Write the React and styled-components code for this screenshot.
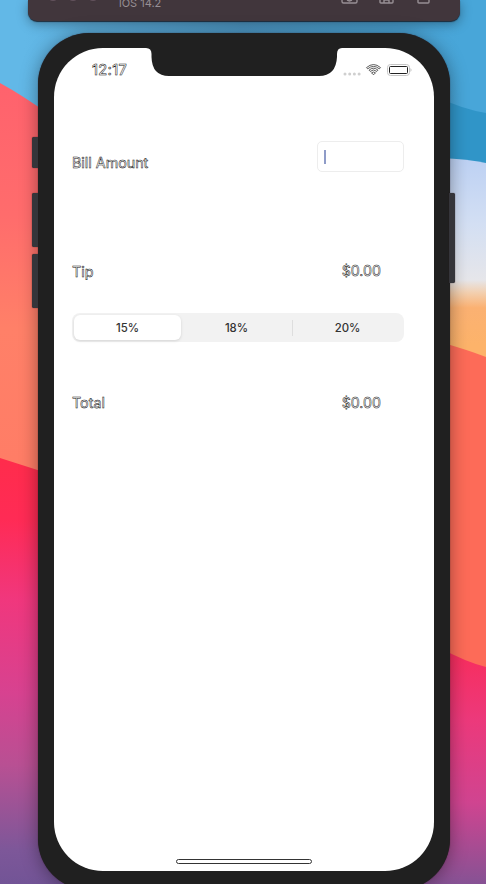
import React from "react";
import styled, { createGlobalStyle } from "styled-components";

const Global = createGlobalStyle`
  * { box-sizing: border-box; }
  html, body { margin: 0; padding: 0; }
  body { width: 486px; height: 884px; overflow: hidden; font-family: Inter, "Liberation Sans", sans-serif; }
`;

const Desktop = styled.main`
  position: relative;
  width: 486px;
  height: 884px;
  overflow: hidden;
  background: #4aa6da;
`;

const WallpaperArt = styled.svg`
  position: absolute;
  inset: 0;
  width: 100%;
  height: 100%;
`;

const SimulatorBar = styled.header`
  position: relative;
  display: flex;
  justify-content: space-between;
  width: 432px;
  height: 21px;
  margin-left: 28px;
  padding: 0 28px 0 19px;
  background: #41363c;
  border-radius: 0 0 9px 9px;
  box-shadow: 0 1px 1px rgba(20, 20, 30, 0.8), 0 3px 12px rgba(0, 0, 0, 0.35);
`;

const BarLeft = styled.div`
  display: flex;
`;

const WindowDots = styled.div`
  display: flex;
  gap: 8px;
  width: 72px;
  margin-top: -11px;
`;

const Dot = styled.span`
  width: 12px;
  height: 12px;
  border-radius: 50%;
  background: #63525d;
`;

const OsVersion = styled.span`
  margin-top: -3px;
  font-size: 11px;
  line-height: 13px;
  color: #978f94;
`;

const BarTools = styled.svg`
  width: 91px;
  height: 5px;
`;

const Phone = styled.section`
  position: relative;
  width: 412px;
  height: 857px;
  margin: 12px 0 0 38px;
  padding: 15px 16px 19px;
  background: #202020;
  border-radius: 51px;
  box-shadow: 0 0 1px rgba(40, 20, 30, 0.9), 0 2px 18px rgba(0, 0, 0, 0.38);
`;

const SideButton = styled.span`
  position: absolute;
  top: ${(p) => p.$top}px;
  ${(p) => (p.$right ? "right: -5px;" : "left: -6px;")}
  width: 6px;
  height: ${(p) => p.$height}px;
  background: #35353a;
  border-radius: ${(p) => (p.$right ? "0 2px 2px 0" : "2px 0 0 2px")};
  box-shadow: 0 0 1px #2a1518;
`;

const Screen = styled.div`
  position: relative;
  display: flex;
  flex-direction: column;
  width: 380px;
  height: 823px;
  overflow: hidden;
  background: #fff;
  border-radius: 49px;
`;

const Notch = styled.svg`
  position: absolute;
  left: 92px;
  top: 0;
  width: 196px;
  height: 29px;
`;

const StatusBar = styled.div`
  display: flex;
  align-items: center;
  justify-content: space-between;
  height: 44px;
  padding: 0 22px 0 38px;
`;

const outlined = `
  color: #fff;
  -webkit-text-stroke: 0.5px #111;
`;

const Clock = styled.time`
  margin-top: -1px;
  font-size: 14.4px;
  font-weight: 500;
  letter-spacing: 0.35px;
  ${outlined}
`;

const StatusIcons = styled.svg`
  width: 69px;
  height: 14px;
`;

const Form = styled.div`
  display: flex;
  flex-direction: column;
  padding: 49px 30px 0 18px;
`;

const Row = styled.div`
  display: flex;
  justify-content: space-between;
  align-items: center;
  height: ${(p) => p.$height}px;
  margin-top: ${(p) => p.$gap || 0}px;
`;

const Label = styled.span`
  font-size: 14.3px;
  line-height: 20px;
  margin-top: ${(p) => p.$shift || 0}px;
  ${outlined}
`;

const Amount = styled.output`
  margin-right: 23px;
  font-size: 14.2px;
  line-height: 20px;
  ${outlined}
`;

const BillField = styled.div`
  display: flex;
  align-items: center;
  width: 87px;
  height: 31px;
  padding-left: 6px;
  border: 1px solid #ededed;
  border-radius: 5px;
`;

const Caret = styled.span`
  width: 2px;
  height: 14px;
  background: #8f9cc8;
`;

const Segments = styled.div`
  display: grid;
  grid-template-columns: 107px 1fr 110px;
  align-items: center;
  height: 29px;
  margin-top: 32px;
  padding: 2px;
  background: #f2f2f2;
  border-radius: 8px;
`;

const Segment = styled.div`
  display: flex;
  align-items: center;
  justify-content: center;
  height: ${(p) => (p.$divided ? 16 : 25)}px;
  font-size: 11.4px;
  font-weight: 500;
  color: #333;
  border-left: ${(p) => (p.$divided ? "1px solid #dedede" : "none")};
  ${(p) => p.$active && "background: #fff; border-radius: 6px; box-shadow: 0 1px 3px rgba(0,0,0,.13);"}
`;

const HomeIndicator = styled.div`
  width: 136px;
  height: 5px;
  margin: auto auto 7px 122px;
  border: 1px solid #343434;
  border-radius: 3px;
`;

function Wallpaper() {
  return (
    <WallpaperArt viewBox="0 0 486 884" aria-hidden="true">
      <defs>
        <linearGradient id="blue" gradientUnits="userSpaceOnUse" x1="0" y1="0" x2="486" y2="0">
          <stop offset="0.05" stopColor="#62b8e7" />
          <stop offset="0.5" stopColor="#4f9ac8" />
          <stop offset="0.95" stopColor="#48a6d9" />
        </linearGradient>
        <linearGradient id="coral" gradientUnits="userSpaceOnUse" x1="0" y1="83" x2="0" y2="460">
          <stop offset="0" stopColor="#ff626d" />
          <stop offset="0.35" stopColor="#ff6c6c" />
          <stop offset="0.65" stopColor="#ff8068" />
          <stop offset="1" stopColor="#ff7d66" />
        </linearGradient>
        <linearGradient id="magenta" gradientUnits="userSpaceOnUse" x1="0" y1="460" x2="0" y2="884">
          <stop offset="0" stopColor="#ff2c4c" />
          <stop offset="0.14" stopColor="#ff2b55" />
          <stop offset="0.33" stopColor="#f0377d" />
          <stop offset="0.55" stopColor="#d74290" />
          <stop offset="0.72" stopColor="#b85093" />
          <stop offset="0.92" stopColor="#7d5799" />
          <stop offset="1" stopColor="#725496" />
        </linearGradient>
        <linearGradient id="sky" gradientUnits="userSpaceOnUse" x1="0" y1="159" x2="0" y2="345">
          <stop offset="0" stopColor="#bdd1f3" />
          <stop offset="0.35" stopColor="#d3dff3" />
          <stop offset="0.65" stopColor="#e6e6ea" />
          <stop offset="0.72" stopColor="#f3cfae" />
          <stop offset="0.8" stopColor="#fbb172" />
          <stop offset="1" stopColor="#fdb36a" />
        </linearGradient>
        <linearGradient id="rightPink" gradientUnits="userSpaceOnUse" x1="0" y1="650" x2="0" y2="884">
          <stop offset="0" stopColor="#f82d5d" />
          <stop offset="0.3" stopColor="#ec397b" />
          <stop offset="0.65" stopColor="#d04490" />
          <stop offset="1" stopColor="#865294" />
        </linearGradient>
      </defs>
      <rect width="486" height="200" fill="url(#blue)" />
      <path d="M440 98Q462 109 486 113V170H440Z" fill="#3095c8" />
      <path d="M0 83Q22 95 50 115V480H0Z" fill="url(#coral)" />
      <path d="M0 458L50 474V700H243V884H0Z" fill="url(#magenta)" />
      <path d="M440 158Q468 159 486 163V370H440Z" fill="url(#sky)" />
      <path d="M440 342Q468 350 486 357V680H440Z" fill="#fd6b58" />
      <path d="M440 648Q466 662 486 667V884H243V700H440Z" fill="url(#rightPink)" />
    </WallpaperArt>
  );
}

export default function App() {
  return (
    <Desktop>
      <Global />
      <Wallpaper />
      <SimulatorBar>
        <BarLeft>
          <WindowDots><Dot /><Dot /><Dot /></WindowDots>
          <OsVersion>iOS 14.2</OsVersion>
        </BarLeft>
        <BarTools viewBox="0 0 91 5" fill="none" stroke="#978f94" strokeWidth="1.4">
          <path d="M1 0V1.5Q1 3 2.500 3H14.500Q16 3 16 1.500V0M6 0L8.500 1L11 0" />
          <path d="M39 0V2Q39 3 40 3H51Q52 3 52 2V0M43 3V0H48V3" />
          <path d="M77 0V2Q77 3 78 3H87Q88 3 88 2V0" />
        </BarTools>
      </SimulatorBar>
      <Phone>
        <SideButton $top={104} $height={31} />
        <SideButton $top={160} $height={54} />
        <SideButton $top={221} $height={54} />
        <SideButton $right $top={160} $height={90} />
        <Screen>
          <Notch viewBox="0 0 196 29">
            <path d="M0 0H196Q191 0 191 6V9Q190 28 173 28H23Q6 28 5.500 9V6Q5.500 0 0 0Z" fill="#202020" />
          </Notch>
          <StatusBar>
            <Clock>12:17</Clock>
            <StatusIcons viewBox="0 0 69 14">
              <g fill="#cfcfcf">
                <circle cx="2" cy="11" r="1.500" /><circle cx="6.700" cy="11" r="1.500" />
                <circle cx="11.400" cy="11" r="1.500" /><circle cx="16.100" cy="11" r="1.500" />
              </g>
              <g fill="none" stroke="#333" strokeWidth="0.8">
                <path d="M23.500 4.600Q30.500 -1.500 37.500 4.600L36.300 5.800Q30.500 1 24.700 5.800ZM26 7.200Q30.500 3.200 35 7.200L33.800 8.400Q30.500 5.500 27.200 8.400ZM28.500 9.800Q30.500 8.200 32.500 9.800L30.500 11.800Z" />
              </g>
              <rect x="44.500" y="1.500" width="22" height="11" rx="3" fill="none" stroke="#c5c5c5" />
              <rect x="46.500" y="3.500" width="18" height="7" rx="1" fill="none" stroke="#222" />
              <path d="M67.500 5Q69.500 7 67.500 9Z" fill="#bbb" />
            </StatusIcons>
          </StatusBar>
          <Form>
            <Row $height={31}>
              <Label $shift={12}>Bill Amount</Label>
              <BillField><Caret /></BillField>
            </Row>
            <Row $height={20} $gap={89}>
              <Label $shift={1}>Tip</Label>
              <Amount>$0.00</Amount>
            </Row>
            <Segments>
              <Segment $active>15%</Segment>
              <Segment>18%</Segment>
              <Segment $divided>20%</Segment>
            </Segments>
            <Row $height={20} $gap={51}>
              <Label>Total</Label>
              <Amount>$0.00</Amount>
            </Row>
          </Form>
          <HomeIndicator />
        </Screen>
      </Phone>
    </Desktop>
  );
}
